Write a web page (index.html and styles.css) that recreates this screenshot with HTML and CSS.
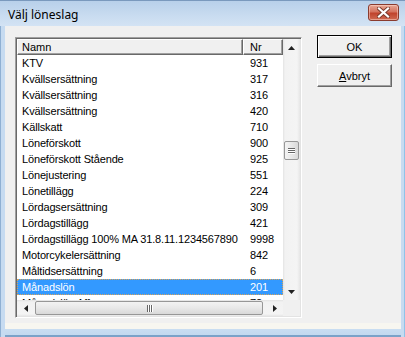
FILE: index.html
```html
<!DOCTYPE html>
<html>
<head>
  <title>Välj löneslag</title>
  <link rel="stylesheet" href="styles.css">
</head>
<body>
  <div class="window">
    <div class="titlebar">
      <span class="title">Välj löneslag</span>
      <div class="close">
        <svg width="13" height="11" viewBox="0 0 13 11">
          <path d="M2 1.5 L11 9.5 M11 1.5 L2 9.5" stroke="#7a3a2c" stroke-width="4" stroke-linecap="square"/>
          <path d="M2 1.5 L11 9.5 M11 1.5 L2 9.5" stroke="#fff" stroke-width="2.2" stroke-linecap="square"/>
        </svg>
      </div>
    </div>

    <div class="client">
      <div class="listbox">
        <div class="listview">
          <div class="header">
            <div class="col-namn">Namn</div>
            <div class="col-nr">Nr</div>
          </div>
          <div class="row"><span class="namn">KTV</span><span class="nr">931</span></div>
          <div class="row"><span class="namn">Kvällsersättning</span><span class="nr">317</span></div>
          <div class="row"><span class="namn">Kvällsersättning</span><span class="nr">316</span></div>
          <div class="row"><span class="namn">Kvällsersättning</span><span class="nr">420</span></div>
          <div class="row"><span class="namn">Källskatt</span><span class="nr">710</span></div>
          <div class="row"><span class="namn">Löneförskott</span><span class="nr">900</span></div>
          <div class="row"><span class="namn">Löneförskott Stående</span><span class="nr">925</span></div>
          <div class="row"><span class="namn">Lönejustering</span><span class="nr">551</span></div>
          <div class="row"><span class="namn">Lönetillägg</span><span class="nr">224</span></div>
          <div class="row"><span class="namn">Lördagsersättning</span><span class="nr">309</span></div>
          <div class="row"><span class="namn">Lördagstillägg</span><span class="nr">421</span></div>
          <div class="row"><span class="namn">Lördagstillägg 100% MA 31.8.11.1234567890</span><span class="nr">9998</span></div>
          <div class="row"><span class="namn">Motorcykelersättning</span><span class="nr">842</span></div>
          <div class="row"><span class="namn">Måltidsersättning</span><span class="nr">6</span></div>
          <div class="row selected"><span class="namn">Månadslön</span><span class="nr">201</span></div>
          <div class="row"><span class="namn">Månadslön Aff</span><span class="nr">72</span></div>
        </div>

        <div class="vscroll">
          <div class="arrow">
            <svg width="7" height="4" viewBox="0 0 7 4"><polygon points="0,4 3.5,0 7,4" fill="#222"/></svg>
          </div>
          <div class="vtrack">
            <div class="vthumb"><span></span><span></span><span></span></div>
          </div>
          <div class="arrow">
            <svg width="7" height="4" viewBox="0 0 7 4"><polygon points="0,0 3.5,4 7,0" fill="#222"/></svg>
          </div>
        </div>

        <div class="hscroll">
          <div class="arrow">
            <svg width="4" height="7" viewBox="0 0 4 7"><polygon points="4,0 0,3.5 4,7" fill="#222"/></svg>
          </div>
          <div class="htrack">
            <div class="hthumb"><span></span><span></span><span></span></div>
          </div>
          <div class="arrow">
            <svg width="4" height="7" viewBox="0 0 4 7"><polygon points="0,0 4,3.5 0,7" fill="#222"/></svg>
          </div>
        </div>

        <div class="corner"></div>
      </div>

      <div class="buttons">
        <div class="btn default">OK</div>
        <div class="btn"><u>A</u>vbryt</div>
      </div>
    </div>

    <div class="bottom-frame"></div>
  </div>
</body>
</html>
```

FILE: styles.css
```css
body {
  margin: 0;
  font-family: "Liberation Sans", Arial, sans-serif;
  font-size: 11px;
  color: #000;
}

.window {
  width: 405px;
  height: 337px;
  display: flex;
  flex-direction: column;
  background-color: #c6dbf1;
  box-shadow: inset 1px 0 #8fb0d3, inset -1px 0 #8fc3e8;
  overflow: hidden;
}

/* title bar */
.titlebar {
  height: 26px;
  display: flex;
  align-items: center;
  justify-content: space-between;
  padding: 0 6px 0 8px;
  background: linear-gradient(#b8d0ea, #c9dcf0 60%, #d3e3f4);
  border-top: 1px solid #7a99bd;
  box-sizing: border-box;
}

.title {
  font-family: "Noto Sans", sans-serif;
  font-size: 12px;
  padding-top: 1px;
}

.close {
  width: 31px;
  height: 17px;
  margin-top: -2px;
  display: flex;
  align-items: center;
  justify-content: center;
  border: 1px solid #8a3b2e;
  border-radius: 3px;
  box-sizing: border-box;
  background: linear-gradient(#e8a896, #d4735f 45%, #c0432d 55%, #cf6a52);
  box-shadow: inset 0 0 0 1px rgba(255, 220, 210, 0.5);
}

/* client area */
.client {
  flex: 1;
  margin: 0 4px 0 5px;
  padding: 9px 10px 0 10px;
  background-color: #f0f0f0;
  display: flex;
  gap: 15px;
}

.listbox {
  width: 287px;
  height: 281px;
  margin-top: 2px;
  box-sizing: border-box;
  border-top: 1px solid #a0a0a0;
  border-left: 1px solid #a0a0a0;
  border-right: 1px solid #fff;
  border-bottom: 1px solid #fff;
  box-shadow: inset 1px 1px #696969, inset -1px -1px #e3e3e3;
  padding: 1px;
  display: grid;
  grid-template-columns: 266px 17px;
  grid-template-rows: 261px 16px;
  background-color: #fff;
}

.listview {
  overflow: hidden;
  background-color: #fff;
}

.header {
  display: flex;
  height: 16px;
  background-color: #f0f0f0;
}

.header div {
  box-sizing: border-box;
  height: 16px;
  line-height: 14px;
  border-top: 1px solid #fff;
  border-left: 1px solid #fff;
  border-right: 1px solid #696969;
  border-bottom: 1px solid #696969;
  box-shadow: inset -1px -1px #a0a0a0;
}

.col-namn {
  width: 226px;
  padding-left: 4px;
}

.col-nr {
  width: 40px;
  padding-left: 6px;
}

.row {
  display: flex;
  height: 16px;
  line-height: 16px;
  white-space: nowrap;
  letter-spacing: -0.15px;
}

.row .namn {
  width: 226px;
  padding-left: 5px;
  box-sizing: border-box;
  overflow: hidden;
}

.row .nr {
  padding-left: 7px;
}

.row.selected {
  background-color: #3399ff;
  color: #fff;
  outline: 1px dotted #d9a35a;
  outline-offset: -1px;
}

/* scrollbars */
.vscroll {
  grid-row: 1;
  grid-column: 2;
  display: flex;
  flex-direction: column;
  background: linear-gradient(to right, #e3e3e3, #f2f2f2 2px, #f4f4f4 14px, #e6e6e6);
}

.arrow {
  width: 17px;
  height: 17px;
  display: flex;
  align-items: center;
  justify-content: center;
  flex-shrink: 0;
}

.vtrack {
  flex: 1;
}

.vthumb {
  width: 15px;
  height: 19px;
  margin: 85px 0 0 1px;
  box-sizing: border-box;
  border: 1px solid #979797;
  border-radius: 2px;
  background: linear-gradient(to right, #f3f3f3, #e8e8e8 50%, #d9d9d9);
  display: flex;
  flex-direction: column;
  align-items: center;
  justify-content: center;
  gap: 1px;
}

.vthumb span {
  width: 7px;
  height: 1px;
  background-color: #666;
  box-shadow: 0 1px #fff;
}

.hscroll {
  grid-row: 2;
  grid-column: 1;
  display: flex;
  background: linear-gradient(#e3e3e3, #f2f2f2 2px, #f4f4f4 14px, #e6e6e6);
}

.htrack {
  flex: 1;
}

.hthumb {
  width: 228px;
  height: 14px;
  margin: 1px 0 0 1px;
  box-sizing: border-box;
  border: 1px solid #979797;
  border-radius: 2px;
  background: linear-gradient(#f3f3f3, #e8e8e8 50%, #d9d9d9);
  display: flex;
  align-items: center;
  justify-content: center;
  gap: 1px;
}

.hthumb span {
  width: 1px;
  height: 7px;
  background-color: #666;
  box-shadow: 1px 0 #fff;
}

.corner {
  grid-row: 2;
  grid-column: 2;
  background-color: #f0f0f0;
}

/* buttons */
.buttons {
  display: flex;
  flex-direction: column;
  gap: 6px;
}

.btn {
  width: 75px;
  height: 23px;
  box-sizing: border-box;
  display: flex;
  align-items: center;
  justify-content: center;
  background-color: #f0f0f0;
  border-top: 1px solid #fff;
  border-left: 1px solid #fff;
  border-right: 1px solid #696969;
  border-bottom: 1px solid #696969;
  box-shadow: inset -1px -1px #a0a0a0;
}

.btn.default {
  border: 1px solid #000;
  box-shadow: inset 1px 1px #fff, inset -1px -1px #696969, inset -2px -2px #a0a0a0;
}

.btn u {
  text-decoration: underline;
}

.bottom-frame {
  height: 14px;
  margin: 0 4px 0 5px;
  background: linear-gradient(#f7f6f0 0, #f7f6f0 6px, #c9ddf1 6px, #c3d9ef 12px, #7ba2c8 12px);
}
```
